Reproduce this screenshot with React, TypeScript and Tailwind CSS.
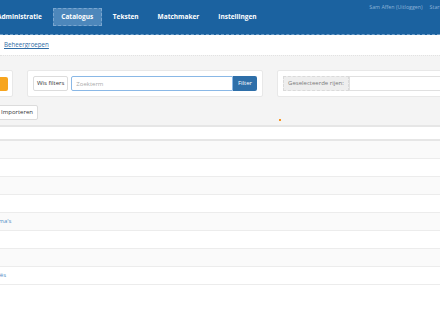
import React from 'react';

const navItems = ['Administratie', 'Catalogus', 'Teksten', 'Matchmaker', 'Instellingen'];

const rows = ['', '', '', '', "Thema's", '', '', 'Categorieës'];

export default function App() {
  return (
    <div className="w-[440px] h-[330px] overflow-hidden bg-white font-['Open_Sans',sans-serif]">
      {/* top bar */}
      <div className="flex h-[35px] bg-[#1b62a0] border-b border-dashed border-[#6c9cc6]">
        <ul className="flex items-center gap-[3px] -ml-[11px]">
          {navItems.map((item) => (
            <li
              key={item}
              className={`h-[18px] flex items-center text-[6.5px] font-bold text-white ${
                item === 'Catalogus'
                  ? 'px-[7.5px] bg-[#4d87bb] border border-dashed border-[#7aa6cf]'
                  : 'px-[8px]'
              }`}
            >
              {item}
            </li>
          ))}
        </ul>
        <div className="ml-auto -mr-[18px] shrink-0 flex gap-[7px] pt-[4px] text-[5.3px] text-[#8db3d8] whitespace-nowrap">
          <span>Sam Affen (Uitloggen)</span>
          <span>Startpagina</span>
        </div>
      </div>

      {/* breadcrumb */}
      <div className="h-[20px] flex items-center px-[4px]">
        <a className="text-[6.2px] text-[#2f6ca6] underline">Beheergroepen</a>
      </div>

      {/* toolbar area */}
      <div className="h-[70px] bg-[#f4f4f4] border-t border-dotted border-[#e2e2e2] pt-[14px]">
        <div className="flex gap-[14px] -ml-[20px]">
          <div className="shrink-0 w-[33px] h-[27px] bg-white border border-[#e8e8e8] rounded-[2px] flex items-center">
            <div className="ml-[6px] w-[21px] h-[14px] bg-[#f7a51e] rounded-[2px]" />
          </div>
          <div className="shrink-0 w-[236px] h-[27px] bg-white border border-[#e8e8e8] rounded-[2px] flex items-center px-[5px]">
            <button className="shrink-0 h-[15px] px-[3px] border border-[#dcdcdc] rounded-[2px] text-[6px] text-[#333] bg-white whitespace-nowrap">
              Wis filters
            </button>
            <div className="ml-[3px] flex-1 min-w-0 h-[15px] flex">
              <input
                className="flex-1 min-w-0 h-[15px] border border-[#8ab8e6] rounded-l-[2px] px-[4px] text-[6px] outline-none placeholder:text-[#aaa]"
                placeholder="Zoekterm"
              />
              <button className="shrink-0 w-[24px] h-[15px] bg-[#2e6fa9] text-white text-[6px] rounded-r-[2px]">
                Filter
              </button>
            </div>
          </div>
          <div className="shrink-0 w-[200px] h-[27px] bg-white border border-[#e8e8e8] rounded-l-[2px] flex items-center pl-[5px]">
            <span className="shrink-0 w-[66px] h-[15px] flex items-center justify-center bg-[#eeeeee] border border-dashed border-[#dadada] text-[6px] text-[#7a7a7a] whitespace-nowrap">
              Geselecteerde rijen:
            </span>
            <input className="flex-1 min-w-0 h-[15px] border border-[#e0e0e0] outline-none" />
          </div>
        </div>
        <div className="flex items-start mt-[8px]">
          <button className="-ml-[4px] h-[15px] px-[4px] bg-white border border-[#dcdcdc] rounded-[2px] text-[6px] text-[#333] whitespace-nowrap">
            Importeren
          </button>
          <span className="ml-[241px] mt-[14px] w-[2px] h-[2px] bg-[#f7931e]" />
        </div>
      </div>

      {/* table */}
      <div className="border-t-2 border-[#e6e6e6]">
        <div className="h-[14px] border-b-2 border-[#e6e6e6]" />
        {rows.map((label, i) => (
          <div
            key={i}
            className={`h-[18px] flex items-center border-b border-[#ececec] ${
              i % 2 === 0 ? 'bg-[#fafafa]' : 'bg-white'
            }`}
          >
            {label && (
              <span className={`text-[6px] text-[#4f8cc6] ${label === "Thema's" ? '-ml-[12px]' : '-ml-[27px]'}`}>
                {label}
              </span>
            )}
          </div>
        ))}
      </div>
    </div>
  );
}
